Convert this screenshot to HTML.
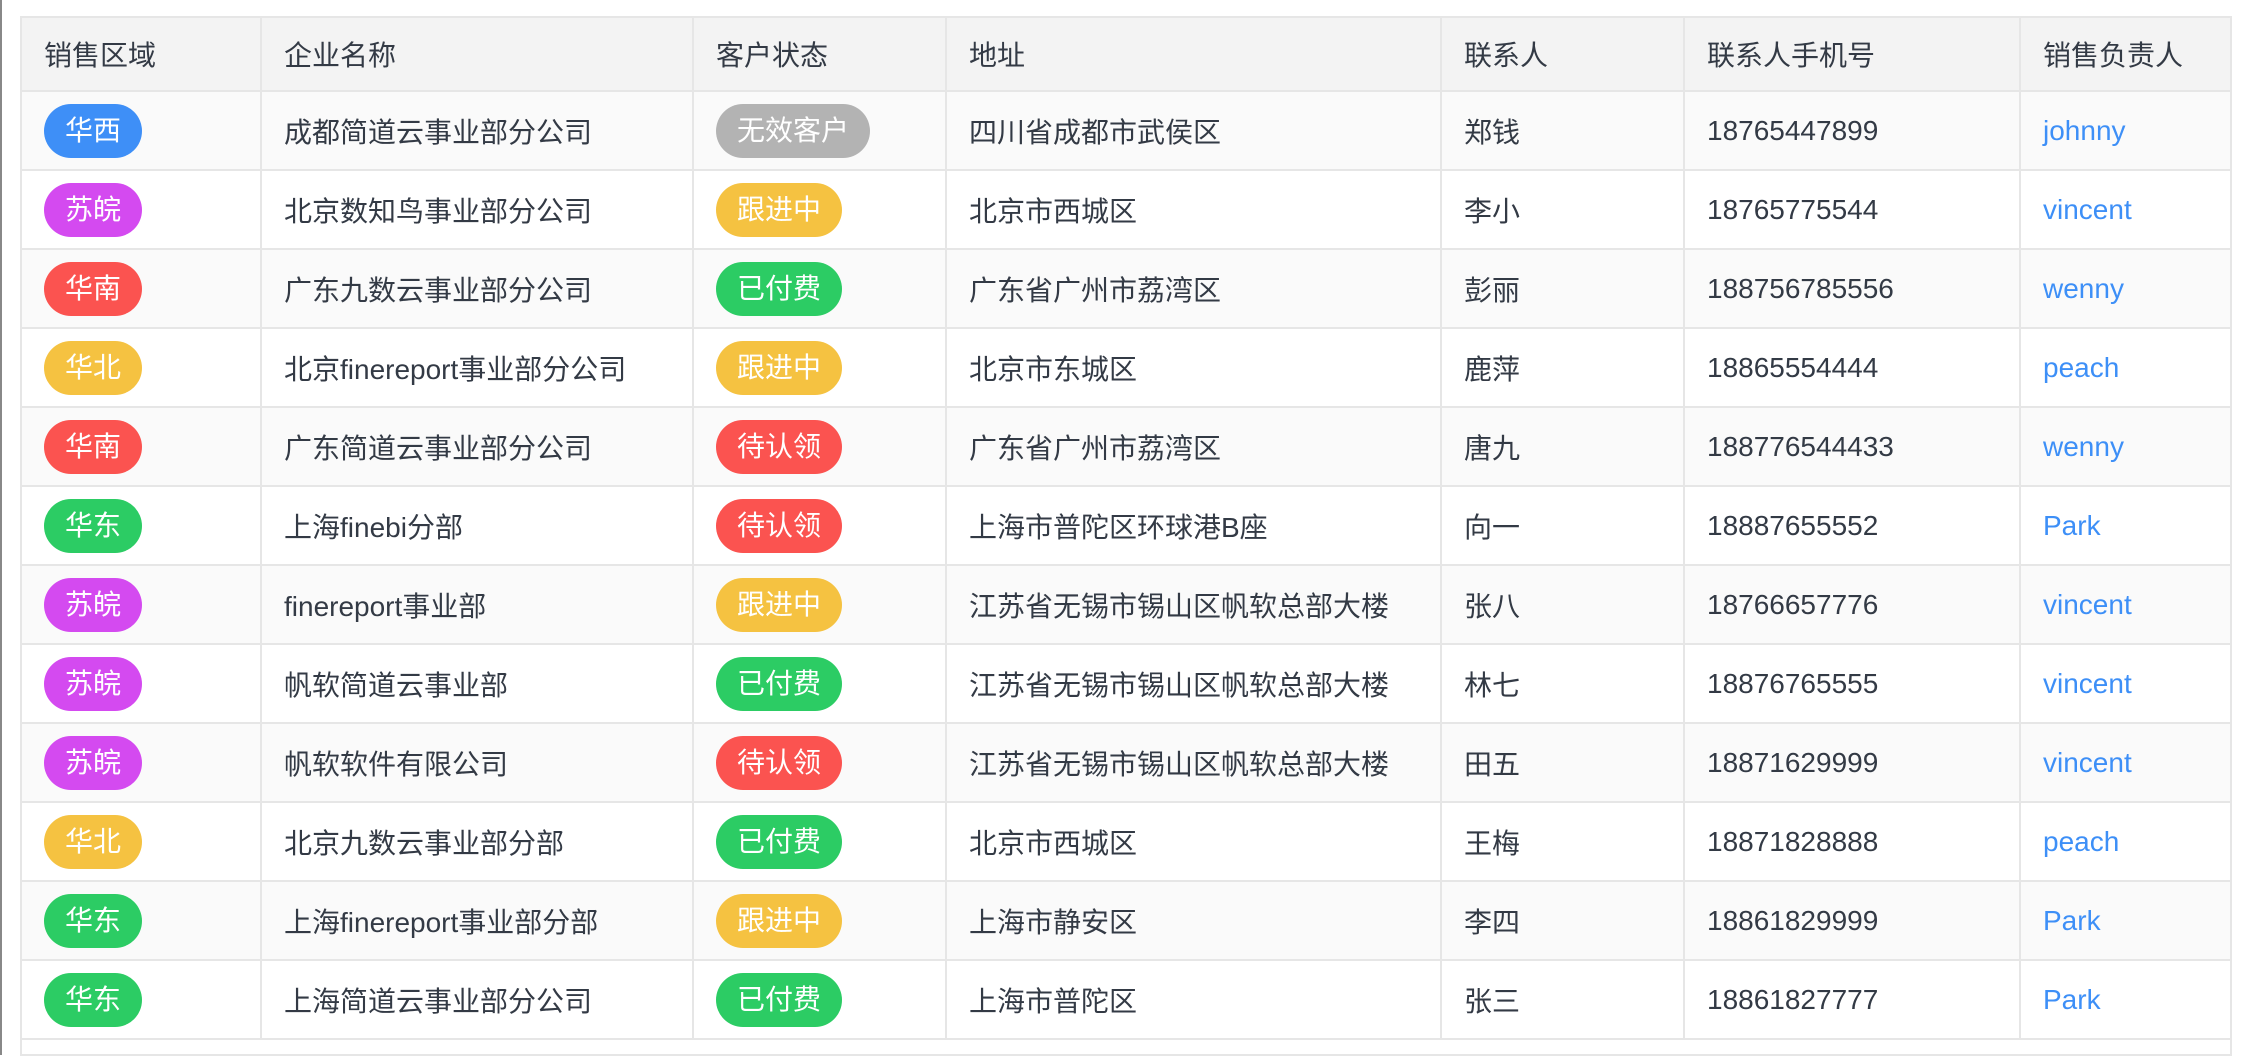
<!DOCTYPE html>
<html><head><meta charset="utf-8"><style>
html,body{margin:0;padding:0;background:#fff;width:2252px;height:1055px;overflow:hidden}
body{font-family:"Liberation Sans","Noto Sans CJK SC",sans-serif;color:#333a45;font-size:28px;border-left:2px solid #888;box-sizing:border-box}
table{position:absolute;left:20px;top:16px;border-collapse:collapse;table-layout:fixed;width:2210px;border:2px solid #e6e6e6}
td,th{border:2px solid #e6e6e6;padding:0 0 0 22px;text-align:left;font-weight:normal;white-space:nowrap;overflow:hidden}
th{background:#f3f3f3;height:72px}
td{height:77px}
tr:nth-child(even) td{background:#fafafa}
.b{display:inline-block;height:54px;line-height:54px;border-radius:27px;color:#fff;padding:0 21px}
.bl{background:#3e8ff7}.pu{background:#d44af0}.rd{background:#fb5350}.ye{background:#f5c241}.gr{background:#2ccc64}.gy{background:#b3b3b3}
.l{color:#3d8ff7}
tr.e td{height:14px;background:#fff}
</style></head><body>
<table>
<colgroup><col style="width:240px"><col style="width:432px"><col style="width:253px"><col style="width:495px"><col style="width:243px"><col style="width:336px"><col style="width:211px"></colgroup>
<tr><th>销售区域</th><th>企业名称</th><th>客户状态</th><th>地址</th><th>联系人</th><th>联系人手机号</th><th>销售负责人</th></tr>
<tr><td><span class="b bl">华西</span></td><td>成都简道云事业部分公司</td><td><span class="b gy">无效客户</span></td><td>四川省成都市武侯区</td><td>郑钱</td><td>18765447899</td><td class="l">johnny</td></tr>
<tr><td><span class="b pu">苏皖</span></td><td>北京数知鸟事业部分公司</td><td><span class="b ye">跟进中</span></td><td>北京市西城区</td><td>李小</td><td>18765775544</td><td class="l">vincent</td></tr>
<tr><td><span class="b rd">华南</span></td><td>广东九数云事业部分公司</td><td><span class="b gr">已付费</span></td><td>广东省广州市荔湾区</td><td>彭丽</td><td>188756785556</td><td class="l">wenny</td></tr>
<tr><td><span class="b ye">华北</span></td><td>北京finereport事业部分公司</td><td><span class="b ye">跟进中</span></td><td>北京市东城区</td><td>鹿萍</td><td>18865554444</td><td class="l">peach</td></tr>
<tr><td><span class="b rd">华南</span></td><td>广东简道云事业部分公司</td><td><span class="b rd">待认领</span></td><td>广东省广州市荔湾区</td><td>唐九</td><td>188776544433</td><td class="l">wenny</td></tr>
<tr><td><span class="b gr">华东</span></td><td>上海finebi分部</td><td><span class="b rd">待认领</span></td><td>上海市普陀区环球港B座</td><td>向一</td><td>18887655552</td><td class="l">Park</td></tr>
<tr><td><span class="b pu">苏皖</span></td><td>finereport事业部</td><td><span class="b ye">跟进中</span></td><td>江苏省无锡市锡山区帆软总部大楼</td><td>张八</td><td>18766657776</td><td class="l">vincent</td></tr>
<tr><td><span class="b pu">苏皖</span></td><td>帆软简道云事业部</td><td><span class="b gr">已付费</span></td><td>江苏省无锡市锡山区帆软总部大楼</td><td>林七</td><td>18876765555</td><td class="l">vincent</td></tr>
<tr><td><span class="b pu">苏皖</span></td><td>帆软软件有限公司</td><td><span class="b rd">待认领</span></td><td>江苏省无锡市锡山区帆软总部大楼</td><td>田五</td><td>18871629999</td><td class="l">vincent</td></tr>
<tr><td><span class="b ye">华北</span></td><td>北京九数云事业部分部</td><td><span class="b gr">已付费</span></td><td>北京市西城区</td><td>王梅</td><td>18871828888</td><td class="l">peach</td></tr>
<tr><td><span class="b gr">华东</span></td><td>上海finereport事业部分部</td><td><span class="b ye">跟进中</span></td><td>上海市静安区</td><td>李四</td><td>18861829999</td><td class="l">Park</td></tr>
<tr><td><span class="b gr">华东</span></td><td>上海简道云事业部分公司</td><td><span class="b gr">已付费</span></td><td>上海市普陀区</td><td>张三</td><td>18861827777</td><td class="l">Park</td></tr>
<tr class="e"><td colspan="7"></td></tr>
</table>
</body></html>
